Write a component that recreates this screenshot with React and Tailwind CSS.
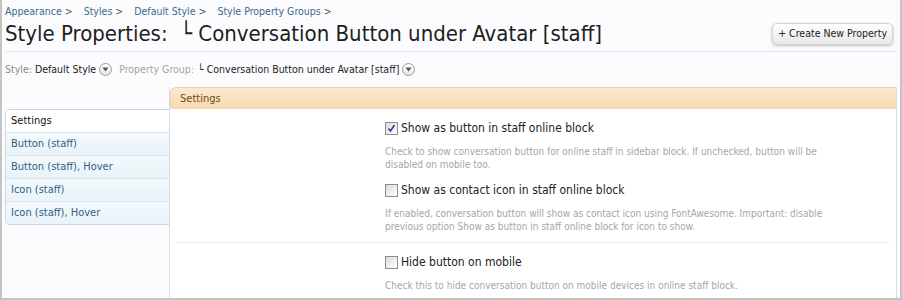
import React from 'react';

const crumbs = ['Appearance', 'Styles', 'Default Style', 'Style Property Groups'];
const tabs = ['Button (staff)', 'Button (staff), Hover', 'Icon (staff)', 'Icon (staff), Hover'];

function Dropdown() {
  return (
    <span className="ml-[3px] inline-flex h-[13px] w-[13px] items-center justify-center rounded-full border border-[#9a9a9a] bg-gradient-to-b from-white to-[#e6e6e6]">
      <svg width="7" height="5" viewBox="0 0 7 5">
        <path d="M0.5 0.5 L6.5 0.5 L3.5 4.5 Z" fill="#555" />
      </svg>
    </span>
  );
}

function Checkbox({ checked }) {
  return (
    <span className="inline-flex h-[13px] w-[13px] shrink-0 items-center justify-center border border-[#8f8f8f] bg-gradient-to-br from-[#dcdcdc] to-white">
      {checked && (
        <svg width="9" height="9" viewBox="0 0 9 9">
          <path d="M1.5 4.5 L3.5 7 L7.5 1" fill="none" stroke="#2a3f8f" strokeWidth="1.6" />
        </svg>
      )}
    </span>
  );
}

function Option({ checked, label, children }) {
  return (
    <div>
      <label className="flex items-center gap-[3px] text-[12px] leading-[15px] text-[#222]">
        <Checkbox checked={checked} />
        <span>{label}</span>
      </label>
      <p className="mt-[9px] max-w-[445px] text-[10px] leading-[13px] text-[#a6a6a6]">{children}</p>
    </div>
  );
}

export default function App() {
  return (
    <div
      className="h-[300px] w-[902px] overflow-hidden border-l-2 border-r-2 border-b-2 border-[#c4c4c4] bg-[#fcfcfe]"
      style={{ fontFamily: '"DejaVu Sans Condensed", "DejaVu Sans", Tahoma, sans-serif' }}
    >
      <div className="px-[3px]">
        <div className="flex pt-[4px] text-[10.5px] text-[#3a6a8e]">
          {crumbs.map((c) => (
            <span key={c} className="mr-[11px]">
              {c}&nbsp;<span className="text-[#555]">&gt;</span>
            </span>
          ))}
        </div>

        <div className="flex items-center justify-between border-b border-[#d8e6ee] pb-[3px] pr-[4px]">
          <h1 className="text-[22px] leading-[28px] text-[#1e1e1e]">
            Style Properties:&nbsp; └ Conversation Button under Avatar [staff]
          </h1>
          <button className="rounded-[5px] border border-[#d4d4d4] bg-gradient-to-b from-white to-[#e8e8ec] px-[5px] py-[2px] text-[10.5px] text-[#222] shadow-[0_1px_3px_rgba(0,0,0,0.25)]">
            + Create New Property
          </button>
        </div>

        <div className="flex items-center pt-[10px] text-[10.5px]">
          <span className="text-[#8a8a8a]">Style:</span>
          <span className="ml-[3px] text-[#222]">Default Style</span>
          <Dropdown />
          <span className="ml-[7px] text-[#a4a4a4]">Property Group:</span>
          <span className="ml-[4px] text-[#222]">└ Conversation Button under Avatar [staff]</span>
          <Dropdown />
        </div>

        <div className="mt-[9px] flex">
          <div className="w-[164px] pt-[22px]">
            <div className="overflow-hidden rounded-l-[5px] border border-r-0 border-[#c6d9e6] text-[11px]">
              <div className="h-[22px] bg-white pl-[5px] leading-[22px] text-[#111]">Settings</div>
              {tabs.map((t) => (
                <div
                  key={t}
                  className="h-[23px] border-t border-[#d4e4ee] bg-gradient-to-b from-[#f4f9fc] to-[#e9f3f9] pl-[5px] leading-[22px] text-[#2f5f86]"
                >
                  {t}
                </div>
              ))}
            </div>
          </div>

          <div className="flex-1 h-[220px] border-l border-r border-[#d8dde2] bg-white">
            <div className="h-[22px] rounded-tl-[6px] border-t border-l border-[#e6d6bd] bg-gradient-to-b from-[#fbe9d1] to-[#f7d9ae] pl-[9px] text-[11px] leading-[21px] text-[#6b4a17]">
              Settings
            </div>
            <div className="flex">
              <div className="w-[215px]" />
              <div className="flex flex-col gap-[12px] pt-[12px]">
                <Option checked label="Show as button in staff online block">
                  Check to show conversation button for online staff in sidebar block. If unchecked, button will be disabled on mobile too.
                </Option>
                <Option label="Show as contact icon in staff online block">
                  If enabled, conversation button will show as contact icon using FontAwesome. Important: disable previous option Show as button in staff online block for icon to show.
                </Option>
              </div>
            </div>
            <div className="mx-[6px] mt-[9px] border-t border-[#e8ecef]" />
            <div className="flex pt-[12px]">
              <div className="w-[215px]" />
              <Option label="Hide button on mobile">
                Check this to hide conversation button on mobile devices in online staff block.
              </Option>
            </div>
          </div>
        </div>
      </div>
    </div>
  );
}
